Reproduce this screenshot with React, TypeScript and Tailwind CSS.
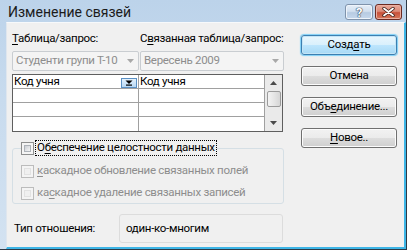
import React from "react";

const FONT = { fontFamily: "Roboto, 'Liberation Sans', sans-serif" };

function Btn({ children, def = false }: { children: React.ReactNode; def?: boolean }) {
  return (
    <div
      className={
        "h-[20px] w-[96px] rounded-[3px] border flex items-center justify-center text-black " +
        (def
          ? "border-[#3c7fb1] bg-[linear-gradient(to_bottom,#eaf6fd_0%,#d9f0fc_50%,#bee6fd_50%,#a7d9f5_100%)] shadow-[inset_0_0_0_1px_#c4e5f6,0_0_1px_1px_#7fd0f7]"
          : "border-[#707070] bg-[linear-gradient(to_bottom,#f2f2f2_0%,#ebebeb_50%,#dddddd_50%,#cfcfcf_100%)] shadow-[inset_0_0_0_1px_#fcfcfc]")
      }
    >
      {children}
    </div>
  );
}

function Check({ disabled = false }: { disabled?: boolean }) {
  return (
    <div
      className={
        "w-[13px] h-[13px] shrink-0 border p-[2px] " +
        (disabled ? "border-[#bcbcbc] bg-[#f4f4f4]" : "border-[#8e8f8f] bg-[#f4f4f4]")
      }
    >
      <div
        className={
          "w-full h-full border " +
          (disabled
            ? "border-[#e2e2e2] bg-[#f0f0f0]"
            : "border-[#aeb3b9] bg-[linear-gradient(135deg,#cbcfd5,#f6f6f6)]")
        }
      />
    </div>
  );
}

function Combo({ text, w }: { text: string; w: string }) {
  return (
    <div
      className={
        w +
        " h-[20px] rounded-[2px] border border-[#c9cdd1] bg-[#f4f4f4] flex items-center pl-[3px] pr-[4px] text-[#8d8d8d]"
      }
    >
      <span className="flex-1 whitespace-nowrap overflow-hidden">{text}</span>
      <svg width="7" height="4" viewBox="0 0 7 4" className="shrink-0">
        <path d="M0 0h7L3.5 4z" fill="#a8a8a8" />
      </svg>
    </div>
  );
}

export default function App() {
  return (
    <div
      style={FONT}
      className="w-[407px] h-[250px] flex flex-col overflow-hidden border-r border-b border-[#2e3a46] bg-[linear-gradient(to_bottom,#bcd3ea_0%,#c8dbee_40%,#d3e2f1_100%)] text-[11.5px] tracking-[-0.3px]"
    >
      {/* title bar */}
      <div className="h-[22px] shrink-0 flex items-start pl-[8px] pr-[4px]">
        <span className="text-[14px] tracking-normal leading-[24px] text-[#1b1b1b] whitespace-nowrap">
          Изменение связей
        </span>
        <div className="ml-auto mt-[4px] flex gap-[2px]">
          <div className="w-[28px] h-[16px] rounded-[3px] border border-[#7f93ab] bg-[linear-gradient(to_bottom,#e5eef8_0%,#d2e0ef_45%,#b7cbe2_55%,#c6d8ec_100%)] shadow-[inset_0_0_0_1px_#eef4fb] flex items-center justify-center">
            <span className="text-[13px] font-bold leading-none text-white [text-shadow:0_0_1px_#2a3a50,0_0_1px_#2a3a50,0_0_1px_#2a3a50]">
              ?
            </span>
          </div>
          <div className="w-[27px] h-[16px] rounded-[3px] border border-[#6b2a22] bg-[linear-gradient(to_bottom,#e9a99b_0%,#dc8a78_45%,#c7503a_55%,#d67a5e_100%)] shadow-[inset_0_0_0_1px_#eab0a2] flex items-center justify-center">
            <svg width="13" height="10" viewBox="0 0 13 10">
              <path d="M2 1.5l9 7M11 1.5l-9 7" stroke="#3a1a14" strokeWidth="3.4" strokeLinecap="round" />
              <path d="M2 1.5l9 7M11 1.5l-9 7" stroke="#ffffff" strokeWidth="1.8" strokeLinecap="round" />
            </svg>
          </div>
        </div>
      </div>

      {/* body */}
      <div className="flex-1 flex pl-[6px]">
        <div className="flex-1 flex bg-[#f0f0f0] border-r-2 border-b-2 border-[#3db5e6] border-l border-l-[#dfe6ee] border-t border-t-[#f7f9fb] text-black">
          {/* left column */}
          <div className="w-[277px] shrink-0 pl-[5px] pt-[9px] flex flex-col">
            <div className="h-[14px] flex items-center whitespace-nowrap">
              <span className="w-[128px] shrink-0">
                <u className="underline-offset-[2px]">Т</u>аблица/запрос:
              </span>
              <span className="shrink-0">
                С<u className="underline-offset-[2px]">в</u>язанная таблица/запрос:
              </span>
            </div>
            <div className="mt-[5px] flex gap-[1px]">
              <Combo text="Студенти групи Т-10" w="w-[127px]" />
              <Combo text="Вересень 2009" w="w-[144px]" />
            </div>

            {/* grid */}
            <div className="mt-[3px] w-[271px] h-[58px] border border-[#5f5f5f] bg-white flex">
              <div className="flex-1 flex flex-col">
                {[0, 1, 2, 3].map((i) => (
                  <div
                    key={i}
                    className={"h-[14px] flex " + (i < 3 ? "border-b border-[#a0a0a0]" : "")}
                  >
                    <div className="w-[126px] border-r border-[#a0a0a0] flex items-center pl-[1px] relative">
                      {i === 0 && <span className="leading-[13px]">Код учня</span>}
                      {i === 0 && (
                        <div className="absolute right-[1px] bottom-0 w-[16px] h-[10px] border border-[#5a8fc3] bg-[linear-gradient(to_bottom,#e4f1fc,#b7d8f5)] flex items-center justify-center">
                          <svg width="8" height="6" viewBox="0 0 8 6">
                            <path d="M0.5 0.5h7L4 4z" fill="#000" />
                            <rect x="1" y="4.5" width="6" height="1.2" fill="#000" />
                          </svg>
                        </div>
                      )}
                    </div>
                    <div className="flex-1 flex items-center pl-[1px] border-r border-[#a0a0a0]">
                      {i === 0 && <span className="leading-[13px]">Код учня</span>}
                    </div>
                  </div>
                ))}
              </div>
              <div className="w-[17px] bg-[#eaeaea] flex flex-col items-center">
                <div className="h-[16px] flex items-center justify-center">
                  <svg width="7" height="4" viewBox="0 0 7 4">
                    <path d="M0 4h7L3.5 0z" fill="#4a4a4a" />
                  </svg>
                </div>
                <div className="w-[14px] h-[16px] rounded-[2px] border border-[#9b9b9b] bg-[linear-gradient(to_right,#f3f3f3,#e6e6e6_50%,#d6d6d6)]" />
                <div className="flex-1" />
                <div className="h-[16px] flex items-center justify-center">
                  <svg width="7" height="4" viewBox="0 0 7 4">
                    <path d="M0 0h7L3.5 4z" fill="#4a4a4a" />
                  </svg>
                </div>
              </div>
            </div>

            {/* group */}
            <fieldset className="mt-[8px] w-[272px] h-[64px] border border-[#d5dfe5] rounded-[3px] px-[8px]">
              <legend className="px-0">
                <div className="flex items-center h-[16px] whitespace-nowrap">
                  <Check />
                  <span className="ml-[1px] h-[16px] px-[1px] flex items-center border border-dotted border-[#000]">
                    О<u className="underline-offset-[2px]">б</u>еспечение целостности данных
                  </span>
                </div>
              </legend>
              <div className="pt-[7px] flex flex-col gap-[6px] text-[#8d8d8d] whitespace-nowrap">
                <div className="h-[16px] flex items-center">
                  <Check disabled />
                  <span className="ml-[3px]">
                    <u className="underline-offset-[2px]">к</u>аскадное обновление связанных полей
                  </span>
                </div>
                <div className="h-[16px] flex items-center">
                  <Check disabled />
                  <span className="ml-[3px]">
                    ка<u className="underline-offset-[2px]">с</u>кадное удаление связанных записей
                  </span>
                </div>
              </div>
            </fieldset>

            <div className="mt-[10px] flex items-center whitespace-nowrap">
              <span className="w-[107px] pl-[2px]">Тип отношения:</span>
              <div className="w-[164px] h-[29px] rounded-[3px] border border-[#dcdcdc] flex items-center pl-[6px]">
                один-ко-многим
              </div>
            </div>
          </div>

          {/* right column */}
          <div className="ml-[17px] pt-[12px] flex flex-col gap-[11px] whitespace-nowrap">
            <Btn def>
              Созд<u className="underline-offset-[2px]">а</u>ть
            </Btn>
            <Btn>Отмена</Btn>
            <Btn>
              Объ<u className="underline-offset-[2px]">е</u>динение...
            </Btn>
            <Btn>
              <u className="underline-offset-[2px]">Н</u>овое..
            </Btn>
          </div>
        </div>
      </div>
    </div>
  );
}
